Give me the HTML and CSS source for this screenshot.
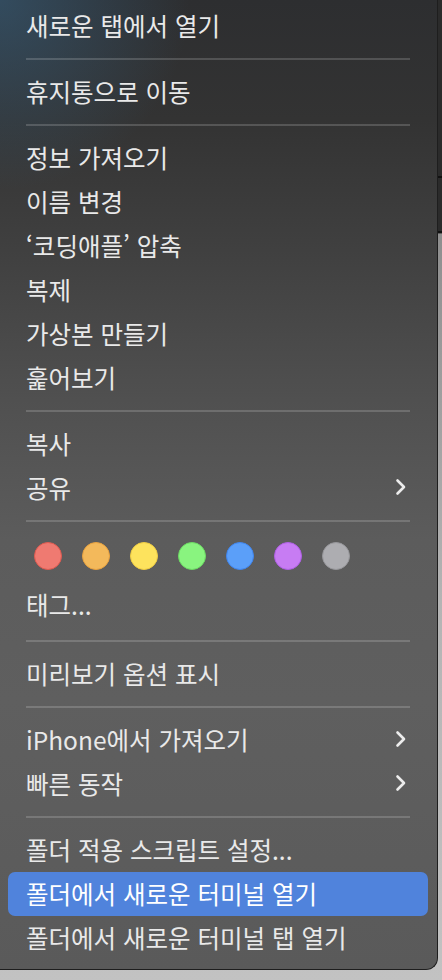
FILE: index.html
```html
<!DOCTYPE html>
<html lang="ko">
<head>
    <meta charset="UTF-8">
    <meta name="viewport" content="width=device-width, initial-scale=1.0">
    <title>Finder 메뉴</title>
    <link rel="stylesheet" href="styles.css">
</head>
<body>
    <div class="menu">
        <div class="item">새로운 탭에서 열기</div>
        <div class="sep"></div>
        <div class="item">휴지통으로 이동</div>
        <div class="sep"></div>
        <div class="item">정보 가져오기</div>
        <div class="item">이름 변경</div>
        <div class="item">‘코딩애플’ 압축</div>
        <div class="item">복제</div>
        <div class="item">가상본 만들기</div>
        <div class="item">훑어보기</div>
        <div class="sep"></div>
        <div class="item">복사</div>
        <div class="item">
            <span>공유</span>
            <svg class="chevron" viewBox="0 0 12 18"><polyline points="2.5,2.5 9,9 2.5,15.5"/></svg>
        </div>
        <div class="sep"></div>

        <!-- 태그 색상 -->
        <div class="tags">
            <span class="dot red"></span>
            <span class="dot orange"></span>
            <span class="dot yellow"></span>
            <span class="dot green"></span>
            <span class="dot blue"></span>
            <span class="dot purple"></span>
            <span class="dot gray"></span>
        </div>
        <div class="item item-tall">태그...</div>
        <div class="sep"></div>
        <div class="item">미리보기 옵션 표시</div>
        <div class="sep"></div>
        <div class="item">
            <span>iPhone에서 가져오기</span>
            <svg class="chevron" viewBox="0 0 12 18"><polyline points="2.5,2.5 9,9 2.5,15.5"/></svg>
        </div>
        <div class="item">
            <span>빠른 동작</span>
            <svg class="chevron" viewBox="0 0 12 18"><polyline points="2.5,2.5 9,9 2.5,15.5"/></svg>
        </div>
        <div class="sep"></div>
        <div class="item">폴더 적용 스크립트 설정...</div>
        <div class="item active">폴더에서 새로운 터미널 열기</div>
        <div class="item">폴더에서 새로운 터미널 탭 열기</div>
    </div>
</body>
</html>
```

FILE: styles.css
```css
body {
    margin: 0;
    padding: 0;
    font-family: "Noto Sans CJK KR", "Noto Sans", sans-serif;
    background:
        linear-gradient(to bottom, transparent 176px, #111 176px, #111 178px, transparent 178px),
        linear-gradient(to bottom, transparent 231px, #111 231px, #111 233px, transparent 233px),
        linear-gradient(to bottom, #2b2b2b 0, #2b2b2b 233px, #8e8e8e 234px, #b4b4b4 600px, #c2c2c2 100%);
    height: 980px;
    overflow: hidden;
}

.menu {
    width: 420px;
    padding: 4px 9px 9px 8px;
    border-right: 1px solid #1e1e1e;
    border-bottom: 1px solid #1e1e1e;
    border-bottom-right-radius: 12px;
    background:
        radial-gradient(circle at 0 0, rgba(55, 95, 125, 0.6) 0, rgba(55, 95, 125, 0) 190px),
        linear-gradient(to bottom, #2d2e30 0, #333 120px, #404040 250px, #505050 400px, #5c5c5c 540px, #5f5f5f 700px, #5a5a5a 100%);
    color: #e9e9e9;
}

.item {
    height: 44px;
    padding: 0 21px 2px 18px;
    box-sizing: border-box;
    display: flex;
    align-items: center;
    justify-content: space-between;
    font-size: 24.5px;
    border-radius: 7px;
    white-space: nowrap;
}

.item-tall {
    height: 50px;
}

.item.active {
    background-color: #5083dc;
    color: #fff;
}

.chevron {
    width: 12px;
    height: 18px;
    fill: none;
    stroke: #ececec;
    stroke-width: 2.6;
    stroke-linecap: round;
    stroke-linejoin: round;
}

.sep {
    height: 22px;
    display: flex;
    align-items: center;
    padding: 0 18px;
}

.sep::before {
    content: "";
    flex: 1;
    height: 2px;
    background-color: rgba(255, 255, 255, 0.17);
}

/* 태그 색상 점 */
.tags {
    height: 48px;
    display: flex;
    align-items: center;
    gap: 20px;
    padding-left: 26px;
}

.dot {
    width: 26px;
    height: 26px;
    border-radius: 50%;
    border: 1px solid;
}

.red    { background-color: #ef7a71; border-color: #df5a50; }
.orange { background-color: #f3b95b; border-color: #e9a23f; }
.yellow { background-color: #fde35d; border-color: #f0cd42; }
.green  { background-color: #89f47f; border-color: #6cdb63; }
.blue   { background-color: #5b9ff9; border-color: #3f86f1; }
.purple { background-color: #c77cf3; border-color: #b05fe6; }
.gray   { background-color: #adadb1; border-color: #97979b; }
```
